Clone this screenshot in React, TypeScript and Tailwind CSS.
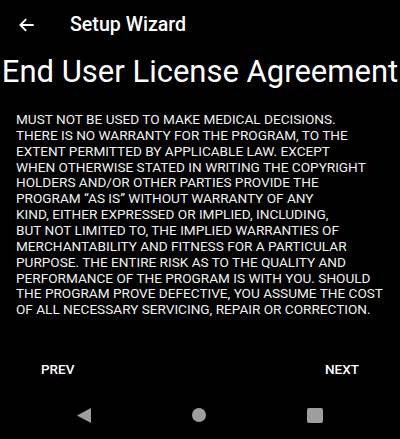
export default function App() {
  return (
    <div className="flex h-[439px] w-[400px] flex-col bg-black text-white [font-family:Roboto,'Liberation_Sans',sans-serif]">
      <header className="flex h-[50px] items-center">
        <div className="flex w-[56px] items-center justify-start pl-[17px]">
          <svg width="20" height="20" viewBox="0 0 24 24" fill="none" stroke="white" strokeWidth="2.2">
            <path d="M20 12H4M11 5l-7 7 7 7" />
          </svg>
        </div>
        <h1 className="pl-[14px] text-[19.6px] font-medium">Setup Wizard</h1>
      </header>

      <h2 className="mt-[4px] text-center text-[31px] leading-[36px]">End User License Agreement</h2>

      <p className="mt-[22px] px-4 text-[13.6px] leading-[15.86px] text-[#f0f0f0]">
        MUST NOT BE USED TO MAKE MEDICAL DECISIONS.<br />
        THERE IS NO WARRANTY FOR THE PROGRAM, TO THE<br />
        EXTENT PERMITTED BY APPLICABLE LAW. EXCEPT<br />
        WHEN OTHERWISE STATED IN WRITING THE COPYRIGHT<br />
        HOLDERS AND/OR OTHER PARTIES PROVIDE THE<br />
        PROGRAM “AS IS” WITHOUT WARRANTY OF ANY<br />
        KIND, EITHER EXPRESSED OR IMPLIED, INCLUDING,<br />
        BUT NOT LIMITED TO, THE IMPLIED WARRANTIES OF<br />
        MERCHANTABILITY AND FITNESS FOR A PARTICULAR<br />
        PURPOSE. THE ENTIRE RISK AS TO THE QUALITY AND<br />
        PERFORMANCE OF THE PROGRAM IS WITH YOU. SHOULD<br />
        THE PROGRAM PROVE DEFECTIVE, YOU ASSUME THE COST<br />
        OF ALL NECESSARY SERVICING, REPAIR OR CORRECTION.
      </p>

      <div className="mt-auto flex items-center justify-between px-[41px] pb-[12px] text-[13.5px] font-medium">
        <span>PREV</span>
        <span>NEXT</span>
      </div>

      <nav className="flex h-[48px] items-center justify-center gap-[101px]">
        <svg width="14" height="15" viewBox="0 0 14 15">
          <path d="M14 0v15L0 7.5z" fill="#9e9e9e" />
        </svg>
        <div className="h-[14px] w-[14px] rounded-full bg-[#9e9e9e]" />
        <div className="h-[15px] w-[16px] rounded-[2px] bg-[#9e9e9e]" />
      </nav>
    </div>
  );
}
